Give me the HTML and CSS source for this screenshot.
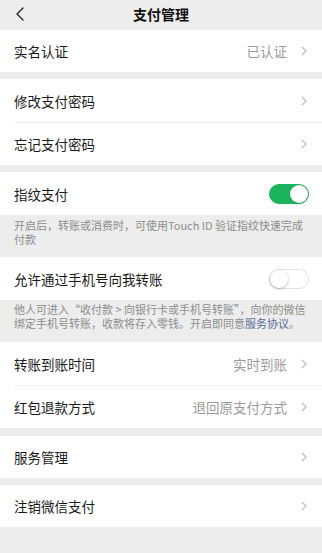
FILE: index.html
```html
<!DOCTYPE html>
<html lang="zh-CN">
<head>
<meta charset="utf-8">
<title>支付管理</title>
<link rel="stylesheet" href="styles.css">
</head>
<body>
<div class="page">
  <header class="nav">
    <svg class="back" width="10" height="14" viewBox="0 0 10 14"><polyline points="8,1 2,7 8,13" fill="none" stroke="#222" stroke-width="1.4" stroke-linecap="round" stroke-linejoin="round"/></svg>
    <div class="title">支付管理</div>
  </header>

  <section class="group">
    <div class="row">
      <span class="label">实名认证</span>
      <span class="value">已认证</span>
      <svg class="chev" width="6" height="10" viewBox="0 0 6 10"><polyline points="1,1 5,5 1,9" fill="none" stroke="#bdbdbd" stroke-width="1.2"/></svg>
    </div>
  </section>

  <section class="group">
    <div class="row">
      <span class="label">修改支付密码</span>
      <svg class="chev" width="6" height="10" viewBox="0 0 6 10"><polyline points="1,1 5,5 1,9" fill="none" stroke="#bdbdbd" stroke-width="1.2"/></svg>
    </div>
    <div class="row">
      <span class="label">忘记支付密码</span>
      <svg class="chev" width="6" height="10" viewBox="0 0 6 10"><polyline points="1,1 5,5 1,9" fill="none" stroke="#bdbdbd" stroke-width="1.2"/></svg>
    </div>
  </section>

  <section class="group">
    <div class="row">
      <span class="label">指纹支付</span>
      <span class="switch on"><span class="knob"></span></span>
    </div>
  </section>
  <p class="desc">开启后，转账或消费时，可使用Touch ID 验证指纹快速完成<br>付款</p>

  <section class="group nogap">
    <div class="row">
      <span class="label">允许通过手机号向我转账</span>
      <span class="switch"><span class="knob"></span></span>
    </div>
  </section>
  <p class="desc desc2">他人可进入“收付款 &gt; 向银行卡或手机号转账”，向你的微信<br>绑定手机号转账，收款将存入零钱。开启即同意<span class="link">服务协议</span>。</p>

  <section class="group nogap">
    <div class="row">
      <span class="label">转账到账时间</span>
      <span class="value">实时到账</span>
      <svg class="chev" width="6" height="10" viewBox="0 0 6 10"><polyline points="1,1 5,5 1,9" fill="none" stroke="#bdbdbd" stroke-width="1.2"/></svg>
    </div>
    <div class="row">
      <span class="label">红包退款方式</span>
      <span class="value">退回原支付方式</span>
      <svg class="chev" width="6" height="10" viewBox="0 0 6 10"><polyline points="1,1 5,5 1,9" fill="none" stroke="#bdbdbd" stroke-width="1.2"/></svg>
    </div>
  </section>

  <section class="group gap8">
    <div class="row short">
      <span class="label">服务管理</span>
      <svg class="chev" width="6" height="10" viewBox="0 0 6 10"><polyline points="1,1 5,5 1,9" fill="none" stroke="#bdbdbd" stroke-width="1.2"/></svg>
    </div>
  </section>

  <section class="group">
    <div class="row short">
      <span class="label">注销微信支付</span>
      <svg class="chev" width="6" height="10" viewBox="0 0 6 10"><polyline points="1,1 5,5 1,9" fill="none" stroke="#bdbdbd" stroke-width="1.2"/></svg>
    </div>
  </section>
</div>
</body>
</html>
```

FILE: styles.css
```css
* { box-sizing: border-box; }
html, body {
  margin: 0;
  padding: 0;
  background: #ededed;
}
body {
  font-family: "Noto Sans CJK SC", "Noto Sans", sans-serif;
  color: #1a1a1a;
  width: 322px;
  height: 553px;
  overflow: hidden;
}
.page {
  display: flex;
  flex-direction: column;
}
.nav {
  height: 30px;
  display: grid;
  grid-template-columns: 1fr auto 1fr;
  align-items: center;
  background: #ededed;
}
.back {
  margin-left: 15px;
  margin-top: -3px;
}
.title {
  font-size: 14px;
  font-weight: 600;
  color: #111;
  margin-top: -3px;
}
.group {
  background: #fff;
  margin-top: 7px;
}
.nav + .group { margin-top: 0; }
.group.nogap { margin-top: 0; }
.group.gap8 { margin-top: 8px; }
.row {
  height: 43px;
  display: flex;
  align-items: center;
  padding: 0 15px 0 14px;
  position: relative;
}
.nav + .group .row { height: 42px; }
.row.short { height: 42px; }
.row + .row::before {
  content: "";
  position: absolute;
  left: 14px;
  right: 0;
  top: 0;
  border-top: 1px solid #f0f0f0;
}
.label {
  font-size: 13.5px;
  flex: 1;
}
.value {
  font-size: 13.5px;
  color: #9b9b9b;
  margin-right: 14px;
}
.chev { display: block; }
.switch {
  width: 40px;
  height: 20px;
  border-radius: 10px;
  background: #fff;
  border: 1px solid #e2e2e2;
  position: relative;
  margin-right: -2px;
}
.switch .knob {
  position: absolute;
  top: 0;
  left: 0;
  width: 18px;
  height: 18px;
  border-radius: 50%;
  background: #fff;
  box-shadow: 0 1px 3px rgba(0,0,0,0.28);
}
.switch.on {
  background: #1bb35b;
  border-color: #1bb35b;
}
.switch.on .knob {
  left: 20px;
  box-shadow: 0 1px 2px rgba(0,0,0,0.15);
}
.desc {
  margin: 0;
  padding: 3px 14px 0 14px;
  height: 42px;
  font-size: 11px;
  line-height: 14px;
  color: #8c8c8c;
  white-space: nowrap;
}
.desc2 {
  padding-top: 2px;
  line-height: 14px;
}
.link { color: #576b95; }
```
